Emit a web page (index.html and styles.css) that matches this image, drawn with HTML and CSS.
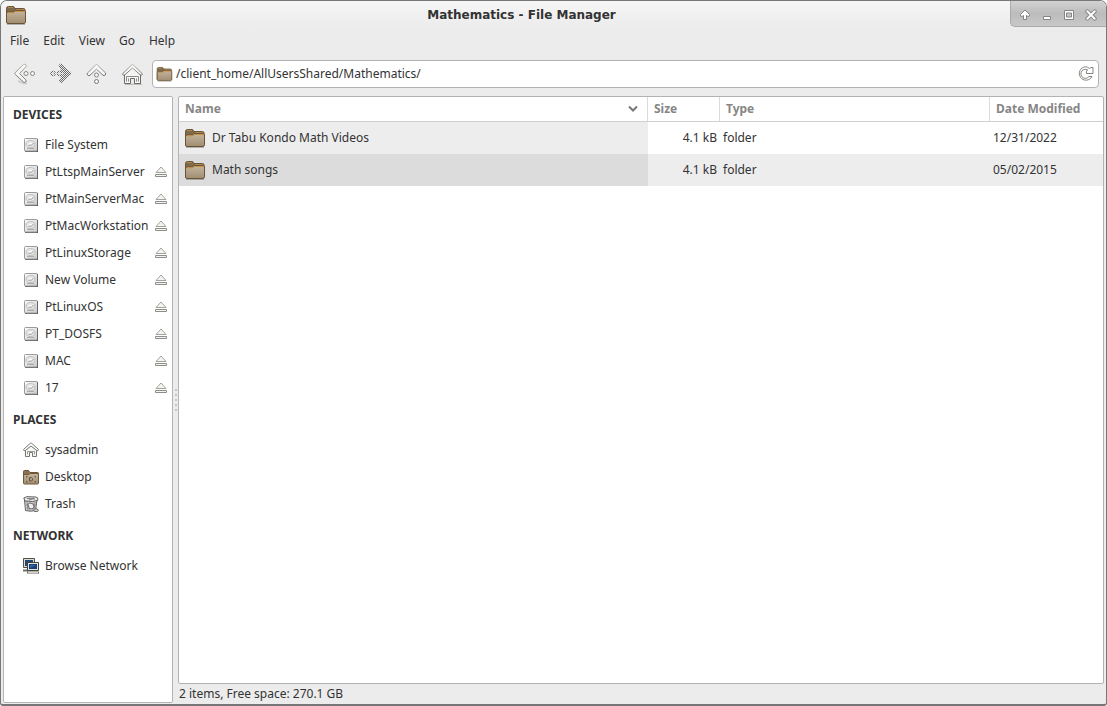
FILE: index.html
```html
<!DOCTYPE html>
<html lang="en">
<head>
<meta charset="utf-8">
<title>Mathematics - File Manager</title>
<link rel="stylesheet" href="styles.css">
</head>
<body>
<svg class="sprite" aria-hidden="true">
  <defs>
    <linearGradient id="tan" x1="0" y1="0" x2="0" y2="1"><stop offset="0" stop-color="#c5b69f"/><stop offset="1" stop-color="#a08d73"/></linearGradient>
    <linearGradient id="steel" x1="0" y1="0" x2="1" y2="1"><stop offset="0" stop-color="#fff"/><stop offset="1" stop-color="#c8c8c8"/></linearGradient>
    <linearGradient id="line" x1="0" y1="0" x2="0" y2="1"><stop offset="0" stop-color="#b4b4b0"/><stop offset="1" stop-color="#6c6c69"/></linearGradient>
    <pattern id="mesh" width="2" height="2" patternUnits="userSpaceOnUse"><path fill="#666" d="M0 0h1v1H0zM1 1h1v1H1z"/></pattern>
  </defs>
  <symbol id="folder" viewBox="0 0 22 20">
    <path d="M2 19.500h18" stroke="#000" stroke-opacity=".25"/>
    <path d="M1.500 17V3.500q0-2 2-2H8q1 0 1.500 1l.5 1h8.500q1.500 0 1.500 1.500v12z" fill="#80694a" stroke="#6b5436"/>
    <path d="M3 2.500h5M11 4.500h8" stroke="#ad8a55"/>
    <path d="M1.500 8.500q0-1.500 1.500-1.500h5q1 0 1.500-.7l.5-.8h9.500q1 0 1 1.500v9.500q0 2-1.500 2H3q-1.500 0-1.500-1.500z" fill="url(#tan)" stroke="#6b5334"/>
    <path d="M2.500 8.500q0-.7.700-.7h5.300q1 0 1.500-.8.200-.5.800-.5h8.700v1" fill="none" stroke="#c9934a"/>
  </symbol>
  <symbol id="back" viewBox="0 0 22 22">
    <path d="M4 18l6 2.500h3" fill="none" stroke="#000" stroke-opacity=".12" stroke-width="2"/>
    <path d="M9.500 1.500q1.500-.8 2.500.3.800 1.200-.3 2.200L5.500 10.500l6.200 6.300q1 1.200 0 2.200-1.200 1-2.300 0L1 11.200q-.6-.7 0-1.400z" fill="#f7f7f5" stroke="url(#line)"/>
    <circle cx="12" cy="10.500" r="2" fill="#f7f7f5" stroke="#858582"/><circle cx="18.500" cy="10.500" r="2" fill="#f7f7f5" stroke="#858582"/>
  </symbol>
  <symbol id="forward" viewBox="0 0 22 22">
    <path d="M12 1.500q-1.500-.8-2.500.3-.8 1.200.3 2.200l6.200 6.500-6.200 6.300q-1 1.200 0 2.200 1.200 1 2.300 0l8.900-7.800q.6-.7 0-1.400z" fill="url(#mesh)" stroke="url(#mesh)"/>
    <circle cx="9.500" cy="10.500" r="2" fill="#eee" stroke="url(#mesh)" stroke-width="1.500"/><circle cx="3" cy="10.500" r="2" fill="#eee" stroke="url(#mesh)" stroke-width="1.500"/>
    <path d="M11 6l4.500 4.500L11 15" fill="none" stroke="url(#mesh)" stroke-width="2"/>
  </symbol>
  <symbol id="up" viewBox="0 0 22 22">
    <path d="M1.500 10q-.8 1.300.3 2.300 1 .8 2.200-.1l6.500-6 6.500 6q1.200.9 2.200-.1 1-1 .2-2.300l-8.200-8q-.7-.6-1.400 0z" fill="#f7f7f5" stroke="url(#line)"/>
    <circle cx="10.500" cy="12" r="2" fill="#f7f7f5" stroke="#858582"/><circle cx="10.500" cy="18.500" r="2" fill="#f7f7f5" stroke="#777"/>
  </symbol>
  <symbol id="home" viewBox="0 0 22 22">
    <path d="M3 21.300h17" stroke="#000" stroke-opacity=".25"/>
    <path d="M2.500 11v9.500h6v-5h4v5h6V11L10.500 4z" fill="#f4f4f2" stroke="#6c6c69"/>
    <path d="M4.500 18.500v-5h12v5M6.500 18.500v-3M14.500 18.500v-3" fill="none" stroke="#8c8c89"/>
    <path d="M.8 10.500q-.5 1 .3 1.500t1.700-.2l7.700-6.800 7.700 6.800q.9.700 1.700.2.800-.7.200-1.500l-8.700-8.500q-.9-.7-1.800 0z" fill="#f7f7f5" stroke="url(#line)"/>
  </symbol>
  <symbol id="house" viewBox="0 0 16 16">
    <path d="M2.500 8v6.500h4v-4h3v4h4V8L8 3.500z" fill="#f6f6f4" stroke="#777774"/>
    <path d="M4.500 12.500v-3h7v3" fill="none" stroke="#999996"/>
    <path d="M.7 7.300q-.4 1 .4 1.400l1 0L8 4l5.900 4.700h1q.8-.4.400-1.400L8.700 1.300q-.7-.5-1.400 0z" fill="#fff" stroke="#777774"/>
  </symbol>
  <symbol id="drive" viewBox="0 0 16 16">
    <path d="M2 14.500h13" stroke="#555"/>
    <rect x="1.500" y="1.500" width="13" height="12.500" rx="1" fill="url(#steel)" stroke="#9a9a9a"/>
    <path d="M14.500 2v12" stroke="#666"/>
    <ellipse cx="7.500" cy="7" rx="4.500" ry="3.500" fill="#e6e6e6" stroke="#bcbcbc"/>
    <path d="M5.500 8.500q4 .5 5-2.500M4 11.500h7" stroke="#aaa" fill="none"/><path d="M6 6.500h3" stroke="#fff"/>
  </symbol>
  <symbol id="eject" viewBox="0 0 14 12">
    <path d="M7 1l5 5.500H2z" fill="#f4f4f1" stroke="#a3a39e"/>
    <path d="M1.500 8.500h11v2h-11z" fill="#f4f4f1" stroke="#8e8e89"/>
  </symbol>
  <symbol id="desktop" viewBox="0 0 16 16">
    <path d="M.5 13V2.500q0-1 1-1h4l1.500 2h7.500q1 0 1 1V13z" fill="#8b7250" stroke="#6b5334"/>
    <path d="M.5 5.500h5.500l1-1h8.500V14q0 1-1 1h-13q-1 0-1-1z" fill="url(#tan)" stroke="#715838"/>
    <path d="M3.500 8.500v-1h1M11.500 7.500h1v1M3.500 12v1h1M11.500 13h1v-1M6.500 8.500h2l1 1v1.500l-1 1h-2z" fill="none" stroke="#67523a"/>
  </symbol>
  <symbol id="trash" viewBox="0 0 16 16">
    <path d="M1.500 4l1 10.500q5 1.500 10 0L14 4z" fill="#d4d4d4" stroke="#666"/>
    <path d="M4 6l1 8M7 6.500V15M10 6.500V15M12 6l-1 8M3 9h10M3.500 12h9" stroke="#888"/>
    <path d="M5 8l2-1 3 1 1 3-2 2-3-1z" fill="#eee" stroke="#777"/>
    <path d="M.8 2l3-1.300L13 1l2 1.500-.5 2-5 1L2 5z" fill="#e9e9e7" stroke="#5c5c5c"/>
    <path d="M4 2.500l8 .5M6 4l5-2" stroke="#777"/>
    <path d="M11 14.500l2-2 2.500 1.500-1 1.500h-3z" fill="#ddd" stroke="#666"/>
  </symbol>
  <symbol id="network" viewBox="0 0 16 16">
    <path d="M.5.500h11v9H.5z" fill="#ddddd5" stroke="#4d5047"/><path d="M2 2h8v6H2z" fill="#24466f"/>
    <path d="M0 12.500h5" stroke="#70736a" stroke-width="2"/>
    <path d="M4.500 4.500h11v8h-11z" fill="#e6e6df" stroke="#41443c"/><path d="M6 6h8v5H6z" fill="#173f7c"/><path d="M7 7h6L7 10z" fill="#3565a5"/>
    <path d="M4 14.500h12" stroke="#666960" stroke-width="2"/><path d="M5 14.500h10" stroke="#d5d5ce"/>
  </symbol>
  <symbol id="reload" viewBox="0 0 16 16">
    <path d="M11.500 2.500Q9.500.8 7.500.8a6.700 6.700 0 1 0 6.500 9.700h-3Q9.500 12.300 7.500 12.300a4.500 4.500 0 1 1 2.300-8.300l-1.300 1v2.500h6.500v-6h-2z" fill="#fff" stroke="#858580"/>
  </symbol>
  <symbol id="shade" viewBox="0 0 12 12"><path d="M6 1l4.500 4.500v1.500L9 7.500 7.500 6.500V10.500h-3v-4L3 7.500 1.500 7V5.500z" fill="#fff" stroke="#858585"/></symbol>
  <symbol id="minimize" viewBox="0 0 12 12"><path d="M2.500 7.500h7v3h-7z" fill="#fff" stroke="#858585"/></symbol>
  <symbol id="maximize" viewBox="0 0 12 12"><path d="M1.500 1.500h9v9h-9z" fill="#fff" stroke="#858585"/><path d="M3.500 4h5v4h-5z" fill="#c4c4c4" stroke="#858585"/></symbol>
  <symbol id="close" viewBox="0 0 12 12"><path d="M2.300 2.300l7.400 7.400M9.700 2.300L2.300 9.700" stroke="#858585" stroke-width="4" stroke-linecap="round"/><path d="M2.300 2.300l7.400 7.400M9.700 2.300L2.300 9.700" stroke="#fff" stroke-width="2" stroke-linecap="round"/></symbol>
</svg>

<div class="window">
  <header class="titlebar">
    <svg class="icon-folder"><use href="#folder"/></svg>
    <h1 class="title">Mathematics - File Manager</h1>
    <div class="controls">
      <button aria-label="Shade"><svg><use href="#shade"/></svg></button>
      <button aria-label="Minimize"><svg><use href="#minimize"/></svg></button>
      <button aria-label="Maximize"><svg><use href="#maximize"/></svg></button>
      <button aria-label="Close"><svg><use href="#close"/></svg></button>
    </div>
  </header>
  <nav class="menubar" aria-label="Menu">
    <button>File</button><button>Edit</button><button>View</button><button>Go</button><button>Help</button>
  </nav>
  <div class="toolbar">
    <button class="tool" aria-label="Back"><svg><use href="#back"/></svg></button>
    <button class="tool" aria-label="Forward" disabled><svg><use href="#forward"/></svg></button>
    <button class="tool" aria-label="Up"><svg><use href="#up"/></svg></button>
    <button class="tool" aria-label="Home"><svg><use href="#home"/></svg></button>
    <div class="location">
      <svg class="location-icon"><use href="#folder"/></svg>
      <input type="text" aria-label="Location" value="/client_home/AllUsersShared/Mathematics/">
      <button aria-label="Reload"><svg><use href="#reload"/></svg></button>
    </div>
  </div>
  <div class="panes">
    <aside class="sidebar">
      <h2>DEVICES</h2>
      <ul>
        <li><a href="#"><svg><use href="#drive"/></svg>File System</a></li>
        <li><a href="#"><svg><use href="#drive"/></svg>PtLtspMainServer</a><button aria-label="Eject PtLtspMainServer"><svg><use href="#eject"/></svg></button></li>
        <li><a href="#"><svg><use href="#drive"/></svg>PtMainServerMac</a><button aria-label="Eject PtMainServerMac"><svg><use href="#eject"/></svg></button></li>
        <li><a href="#"><svg><use href="#drive"/></svg>PtMacWorkstation</a><button aria-label="Eject PtMacWorkstation"><svg><use href="#eject"/></svg></button></li>
        <li><a href="#"><svg><use href="#drive"/></svg>PtLinuxStorage</a><button aria-label="Eject PtLinuxStorage"><svg><use href="#eject"/></svg></button></li>
        <li><a href="#"><svg><use href="#drive"/></svg>New Volume</a><button aria-label="Eject New Volume"><svg><use href="#eject"/></svg></button></li>
        <li><a href="#"><svg><use href="#drive"/></svg>PtLinuxOS</a><button aria-label="Eject PtLinuxOS"><svg><use href="#eject"/></svg></button></li>
        <li><a href="#"><svg><use href="#drive"/></svg>PT_DOSFS</a><button aria-label="Eject PT_DOSFS"><svg><use href="#eject"/></svg></button></li>
        <li><a href="#"><svg><use href="#drive"/></svg>MAC</a><button aria-label="Eject MAC"><svg><use href="#eject"/></svg></button></li>
        <li><a href="#"><svg><use href="#drive"/></svg>17</a><button aria-label="Eject 17"><svg><use href="#eject"/></svg></button></li>
      </ul>
      <h2>PLACES</h2>
      <ul>
        <li><a href="#"><svg><use href="#house"/></svg>sysadmin</a></li>
        <li><a href="#"><svg><use href="#desktop"/></svg>Desktop</a></li>
        <li><a href="#"><svg><use href="#trash"/></svg>Trash</a></li>
      </ul>
      <h2>NETWORK</h2>
      <ul>
        <li><a href="#"><svg><use href="#network"/></svg>Browse Network</a></li>
      </ul>
    </aside>
    <div class="splitter"><i></i><i></i><i></i><i></i><i></i></div>
    <main class="content">
      <div class="files">
        <table>
          <thead>
            <tr>
              <th><div class="sorted">Name<svg viewBox="0 0 12 8"><path d="M2 1.500l4 4 4-4" fill="none" stroke="#777" stroke-width="2"/></svg></div></th>
              <th class="size">Size</th><th class="type">Type</th><th class="date">Date Modified</th>
            </tr>
          </thead>
          <tbody>
            <tr><td><div class="file"><svg class="icon-folder"><use href="#folder"/></svg>Dr Tabu Kondo Math Videos</div></td><td class="number">4.1 kB</td><td>folder</td><td>12/31/2022</td></tr>
            <tr><td><div class="file"><svg class="icon-folder"><use href="#folder"/></svg>Math songs</div></td><td class="number">4.1 kB</td><td>folder</td><td>05/02/2015</td></tr>
          </tbody>
        </table>
      </div>
      <footer class="status">2 items, Free space: 270.1 GB</footer>
    </main>
  </div>
</div>
</body>
</html>
```
FILE: styles.css
```css
* { box-sizing: border-box; }
body {
  margin: 0;
  background: #fff;
  color: #333;
  font: 12px/16px "Noto Sans", sans-serif;
}
button, input {
  margin: 0;
  padding: 0;
  border: 0;
  background: none;
  color: inherit;
  font: inherit;
}
svg { display: block; flex: none; }
.sprite { position: absolute; width: 0; height: 0; }

.window {
  display: flex;
  flex-direction: column;
  height: 100vh;
  border: 1px solid #777;
  border-bottom-width: 2px;
  border-radius: 7px 7px 3px 3px;
  background: #ececec;
  overflow: hidden;
}

.titlebar {
  display: grid;
  grid-template-columns: 32px 1fr 96px;
  height: 26px;
  background: linear-gradient(#f6f6f6, #ececec);
}
.titlebar > .icon-folder { margin: 4px 4px 0; }
.icon-folder { width: 22px; height: 20px; }
.title {
  margin: 0;
  padding-top: 6px;
  font: bold 12px/16px "DejaVu Sans", sans-serif;
  text-align: center;
}
.controls {
  display: flex;
  align-items: center;
  gap: 10px;
  padding: 3px 0 0 8px;
  border: solid #aaa;
  border-width: 0 0 1px 1px;
  border-radius: 0 0 0 5px;
  background: linear-gradient(#d2d2d2, #bcbcbc 50%, #c8c8c8);
}
.controls svg { width: 12px; height: 12px; }

.menubar { display: flex; gap: 14px; padding: 5px 9px 6px; }
.menubar button { height: 17px; }

.toolbar {
  display: flex;
  align-items: center;
  height: 41px;
  padding: 0 7px 4px 6px;
}
.tool {
  display: grid;
  place-items: center;
  width: 36px;
  height: 34px;
}
.tool svg { width: 22px; height: 22px; }
.location {
  display: flex;
  flex: 1;
  align-items: center;
  height: 28px;
  margin-left: 1px;
  padding: 0 4px 0 3px;
  border: 1px solid #b3b3b3;
  border-radius: 4px;
  background: #fff;
}
.location-icon { width: 17px; height: 18px; }
.location input { flex: 1; min-width: 0; padding-left: 3px; outline: 0; }
.location button svg { width: 16px; height: 16px; }

.panes { display: flex; flex: 1; min-height: 0; padding: 0 2px 1px; }
.sidebar {
  flex: none;
  width: 170px;
  border: 1px solid #b3b3b3;
  border-radius: 2px;
  background: #fff;
  overflow: hidden;
}
.sidebar h2 {
  margin: 0;
  padding-left: 9px;
  font-size: 12px;
  line-height: 35px;
}
.sidebar ul { margin: 0; padding: 0; list-style: none; }
.sidebar li { display: flex; align-items: center; height: 27px; padding: 0 4px 1px 19px; }
.sidebar a {
  display: flex;
  flex: 1;
  align-items: center;
  gap: 6px;
  color: inherit;
  text-decoration: none;
  white-space: nowrap;
}
.sidebar a svg { width: 16px; height: 16px; }
.sidebar button svg { width: 14px; height: 12px; }

.splitter {
  display: flex;
  flex: none;
  flex-direction: column;
  align-items: center;
  justify-content: center;
  gap: 3px;
  width: 5px;
}
.splitter i { width: 2px; height: 2px; background: #c4c4c4; }

.content { display: flex; flex: 1; flex-direction: column; min-width: 0; }
.files {
  flex: 1;
  border: 1px solid #b3b3b3;
  border-radius: 2px;
  background: #fff;
  overflow: hidden;
}
table { width: 100%; border-collapse: separate; border-spacing: 0; table-layout: fixed; }
th {
  height: 25px;
  padding: 0 6px;
  border-bottom: 1px solid #cfcfcf;
  border-right: 1px solid #dadada;
  color: #868686;
  text-align: left;
}
th:last-child { border-right: 0; }
.size { width: 72px; }
.type { width: 270px; }
.date { width: 113px; }
.sorted { display: flex; align-items: center; justify-content: space-between; }
.sorted svg { width: 12px; height: 8px; margin-right: 2px; }
td { height: 32px; padding: 0 3px; }
td:first-child { background: #ededed; }
tbody tr:nth-child(2) td { background: #ededed; }
tbody tr:nth-child(2) td:first-child { background: #dcdcdc; }
.file { display: flex; align-items: center; gap: 6px; padding-left: 2px; }
.number { text-align: right; }
.status { height: 19px; padding-left: 1px; line-height: 19px; }
```
